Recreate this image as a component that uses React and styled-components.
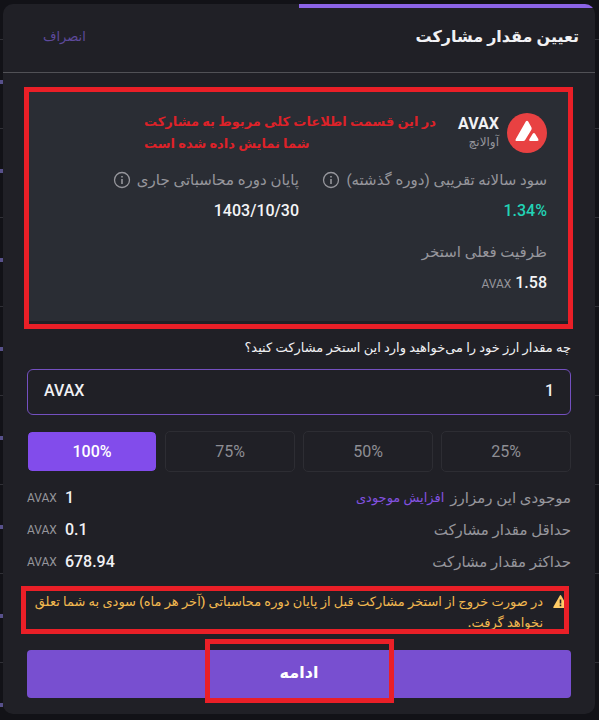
import React, { useState } from 'react'
import styled, { createGlobalStyle } from 'styled-components'

const GlobalStyle = createGlobalStyle`
  * {
    box-sizing: border-box;
  }
  body {
    margin: 0;
    background: #121217;
    color: #f1f1f4;
    font-family: Roboto, "DejaVu Sans", sans-serif;
    font-size: 16px;
    line-height: 24px;
  }
  button, input {
    font-family: inherit;
    font-size: inherit;
  }
`

// dimmed list behind the modal, only its edges are visible
const Backdrop = styled.div`
  min-height: 100vh;
  padding: 4px 4px 6px 3px;
  background:
    repeating-linear-gradient(transparent 0 80px, #57508a 80px 84px, transparent 84px 89px) left top / 3px 100% no-repeat,
    repeating-linear-gradient(transparent 0 39px, #303036 39px 40px, transparent 40px 89px),
    #121217;
`

const Modal = styled.main`
  border-radius: 10px;
  overflow: hidden;
  background: #202026;
`

const Progress = styled.div`
  width: 50%;
  height: 4px;
  background: #8b63e6;
`

const Header = styled.header`
  display: flex;
  align-items: center;
  justify-content: space-between;
  height: 65px;
  padding: 0 16px 6px 40px;
  border-bottom: 1px solid #515156;
`

const Title = styled.h1`
  margin: 0;
  font-size: 16px;
  font-weight: 700;
`

const LinkButton = styled.button`
  padding: 0;
  border: 0;
  background: none;
  color: ${props => props.$dim ? '#5e4a9c' : '#8352e0'};
  font-size: 13px;
  line-height: 24px;
  cursor: pointer;
`

const Body = styled.div`
  padding: 15px 24px 16px;
`

// red marker frame drawn over the part it surrounds
const Marker = styled.span`
  position: absolute;
  inset: ${props => props.$inset};
  border: 5px solid #ea1f27;
  pointer-events: none;
`

const Card = styled.section`
  position: relative;
  padding: 25px 24px;
  background: #2a2d34;
`

const Note = styled.p`
  position: absolute;
  top: 23px;
  left: 117px;
  margin: 0;
  color: #dd2229;
  font-size: 13px;
  font-weight: 700;
  line-height: 22px;
  text-align: left;
  white-space: nowrap;
`

const Coin = styled.div`
  display: flex;
  align-items: center;
  gap: 8px;
  margin-bottom: 15px;
  svg {
    width: 40px;
    height: 40px;
  }
`

const CoinName = styled.div`
  display: flex;
  flex-direction: column;
  line-height: 18px;
  strong {
    font-weight: 700;
  }
  small {
    color: #96969c;
    font-size: 12px;
  }
`

const Stats = styled.dl`
  display: grid;
  grid-template-columns: 1fr 1fr;
  row-gap: 17px;
  margin: 0;
`

const Stat = styled.div`
  display: flex;
  flex-direction: column;
  gap: 7px;
  white-space: nowrap;
  dt {
    display: flex;
    align-items: center;
    gap: 6px;
    color: #96969c;
    font-size: 15px;
  }
  dd {
    margin: 0;
    color: ${props => props.$positive ? '#22d3b6' : '#f4f4f6'};
    font-weight: 500;
  }
`

const Unit = styled.span`
  color: #96969c;
  font-size: 12px;
  font-weight: 400;
`

const Question = styled.label`
  display: block;
  margin-top: 17px;
  font-size: 13px;
  font-weight: 500;
  line-height: 20px;
`

const AmountField = styled.div`
  display: flex;
  align-items: center;
  height: 46px;
  margin-top: 11px;
  padding: 0 16px 3px;
  border: 1px solid #7450c0;
  border-radius: 6px;
  font-weight: 500;
  input {
    flex: 1;
    min-width: 0;
    padding: 0;
    border: 0;
    outline: 0;
    background: none;
    color: #f1f1f4;
    font-weight: 500;
  }
`

const Percents = styled.div`
  display: grid;
  grid-template-columns: repeat(4, 1fr);
  gap: 8px;
  margin-top: 16px;
`

const PercentButton = styled.button`
  height: 41px;
  padding: 0;
  border: 1px solid ${props => props.$active ? '#202026' : '#2d2d33'};
  border-radius: 5px;
  background: ${props => props.$active ? '#824ceb' : 'none'};
  background-clip: padding-box;
  color: ${props => props.$active ? '#fff' : '#8e8e94'};
  font-weight: ${props => props.$active ? 500 : 400};
  cursor: pointer;
`

const Limits = styled.dl`
  display: flex;
  flex-direction: column;
  gap: 8px;
  margin: 14px 0 0;
`

const Limit = styled.div`
  display: flex;
  justify-content: space-between;
  dt {
    display: flex;
    gap: 6px;
    color: #96969c;
    font-size: 15px;
  }
  dd {
    display: flex;
    gap: 8px;
    margin: 0;
    font-weight: 500;
  }
`

const Warning = styled.div`
  position: relative;
  display: flex;
  gap: 9px;
  margin-top: 17px;
  color: #f2b950;
  font-size: 13px;
  font-weight: 500;
  line-height: 21px;
  p {
    flex: 1;
    margin: 0;
  }
  svg {
    flex: none;
    width: 19px;
    height: 21px;
  }
`

const SubmitWrap = styled.div`
  position: relative;
  margin-top: 17px;
`

const SubmitButton = styled.button`
  width: 100%;
  height: 48px;
  padding: 0 0 4px;
  border: 0;
  border-radius: 4px;
  background: #784fd0;
  color: #fff;
  font-size: 16px;
  font-weight: 700;
  cursor: pointer;
`

const AvaxLogo = () => (
  <svg viewBox="0 0 40 40" aria-hidden="true">
    <circle cx="20" cy="20" r="20" fill="#e84142" />
    <path
      d="M18.8 8.600q1.200-1.600 2.400 0l3.200 5.600q.6 1.300 0 2.600L18.300 26.800q-.7 1.200-2 1.200H9.800q-2 0-1-2zM25.700 20.700q1.200-1.600 2.400 0l3.200 5.400q.9 1.900-1 1.900h-6.900q-1.900 0-.9-1.900z"
      fill="#fff"
    />
  </svg>
)

const InfoIcon = () => (
  <svg width="18" height="18" viewBox="0 0 18 18" fill="none" stroke="currentColor" aria-hidden="true">
    <circle cx="9" cy="9" r="7.500" strokeWidth="1.300" />
    <path d="M9 8v5M9 5v1.600" strokeWidth="1.600" />
  </svg>
)

const WarnIcon = () => (
  <svg viewBox="0 0 19 21" aria-hidden="true">
    <path d="M8 4.300q.5-.7 1 0L15.700 16q.4 1-.6 1H1.900q-1 0-.6-1z" fill="#ffcb66" />
    <path d="M8.500 8.500v4M8.500 13.600v1.700" stroke="#202026" strokeWidth="1.600" />
  </svg>
)

const percents = [25, 50, 75, 100]

const App = () => {
  const [amount, setAmount] = useState('1')
  const [percent, setPercent] = useState(100)

  return (
    <>
      <GlobalStyle />
      <Backdrop dir="rtl" lang="fa">
        <Modal>
          <Progress />
          <Header>
            <Title>تعیین مقدار مشارکت</Title>
            <LinkButton type="button" $dim>انصراف</LinkButton>
          </Header>
          <Body>
            <Card>
              <Coin>
                <AvaxLogo />
                <CoinName>
                  <strong>AVAX</strong>
                  <small>آوالانچ</small>
                </CoinName>
              </Coin>
              <Stats>
                <Stat $positive>
                  <dt>سود سالانه تقریبی (دوره گذشته) <InfoIcon /></dt>
                  <dd><bdi dir="ltr">1.34%</bdi></dd>
                </Stat>
                <Stat>
                  <dt>پایان دوره محاسباتی جاری <InfoIcon /></dt>
                  <dd><bdi dir="ltr">1403/10/30</bdi></dd>
                </Stat>
                <Stat>
                  <dt>ظرفیت فعلی استخر</dt>
                  <dd>1.58 <Unit>AVAX</Unit></dd>
                </Stat>
              </Stats>
              <Note>
                در این قسمت اطلاعات کلی مربوط به مشارکت
                <br />
                شما نمایش داده شده است
              </Note>
              <Marker $inset="-1px -2px -8px -3px" />
            </Card>

            <Question htmlFor="amount">چه مقدار ارز خود را می‌خواهید وارد این استخر مشارکت کنید؟</Question>
            <AmountField>
              <input id="amount" value={amount} onChange={(e) => setAmount(e.target.value)} />
              <span>AVAX</span>
            </AmountField>
            <Percents>
              {
                percents.map(value => (
                  <PercentButton
                    key={value}
                    type="button"
                    dir="ltr"
                    $active={value === percent}
                    onClick={() => setPercent(value)}
                  >
                    {value}%
                  </PercentButton>
                ))
              }
            </Percents>

            <Limits>
              <Limit>
                <dt>موجودی این رمزارز <LinkButton type="button">افزایش موجودی</LinkButton></dt>
                <dd>1 <Unit>AVAX</Unit></dd>
              </Limit>
              <Limit>
                <dt>حداقل مقدار مشارکت</dt>
                <dd>0.1 <Unit>AVAX</Unit></dd>
              </Limit>
              <Limit>
                <dt>حداکثر مقدار مشارکت</dt>
                <dd>678.94 <Unit>AVAX</Unit></dd>
              </Limit>
            </Limits>

            <Warning role="note">
              <WarnIcon />
              <p>در صورت خروج از استخر مشارکت قبل از پایان دوره محاسباتی (آخر هر ماه) سودی به شما تعلق نخواهد گرفت.</p>
              <Marker $inset="-5px 2px -1px -6px" />
            </Warning>

            <SubmitWrap>
              <SubmitButton type="button">ادامه</SubmitButton>
              <Marker $inset="-11px 177px -5px 178px" />
            </SubmitWrap>
          </Body>
        </Modal>
      </Backdrop>
    </>
  )
}

export default App
